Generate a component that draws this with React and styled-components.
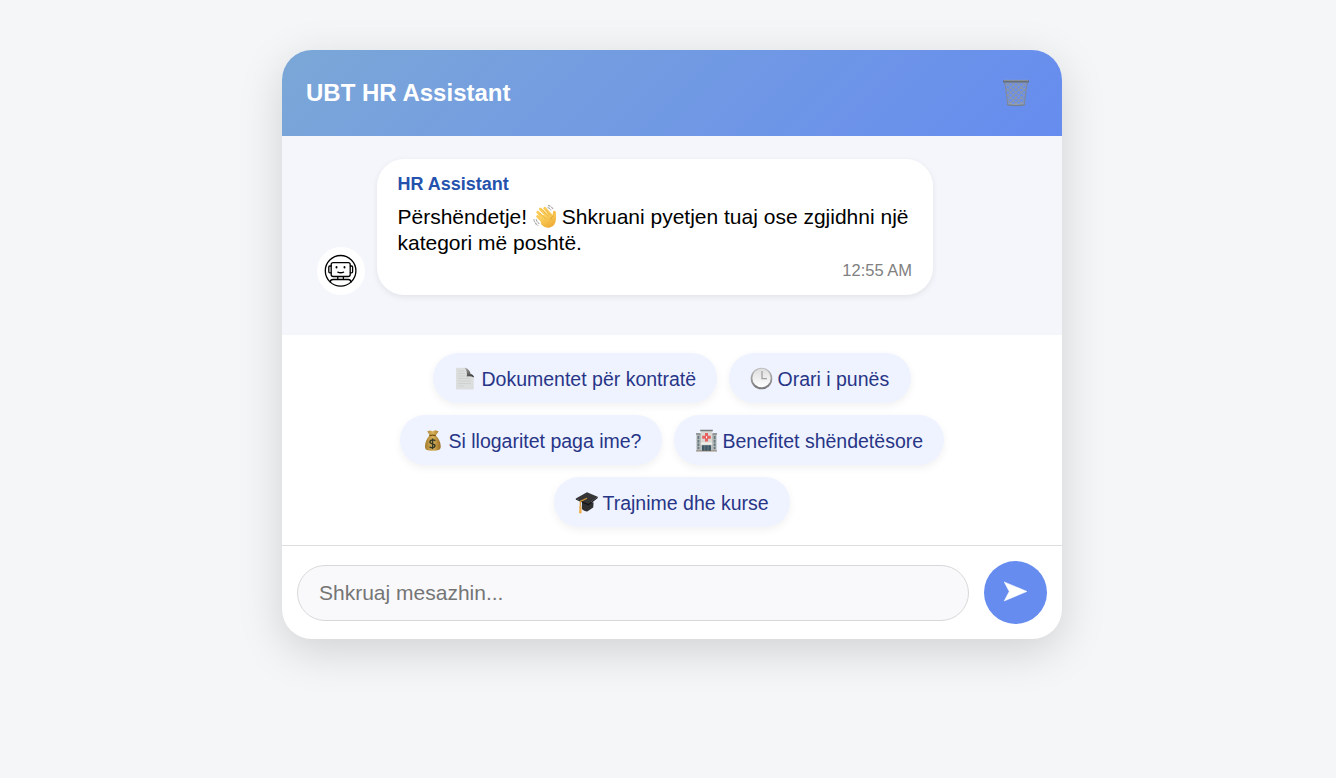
import React from "react";
import styled, { createGlobalStyle } from "styled-components";

const GlobalStyle = createGlobalStyle`
  * { box-sizing: border-box; }
  body {
    margin: 0;
    background: #f4f6f8;
    font-family: "Liberation Sans", Arial, sans-serif;
  }
  button, input { font-family: inherit; }
`;

const Page = styled.main`
  display: flex;
  justify-content: center;
  min-height: 778px;
  padding: 50px 0 0 8px;
  align-items: flex-start;
`;

const Card = styled.section`
  width: 780px;
  background: #fff;
  border-radius: 30px;
  overflow: hidden;
  box-shadow: 0 12px 45px rgba(0, 0, 0, 0.15);
`;

const Header = styled.header`
  display: flex;
  align-items: center;
  justify-content: space-between;
  height: 86px;
  padding: 0 32px 0 24px;
  background: linear-gradient(135deg, #7ba7d7, #668cef);
`;

const Title = styled.h1`
  margin: 0;
  color: #fff;
  font-size: 24px;
  line-height: 28px;
`;

const ClearButton = styled.button`
  display: flex;
  padding: 0;
  border: 0;
  background: none;
`;

const Messages = styled.div`
  display: flex;
  align-items: flex-end;
  gap: 12px;
  height: 199px;
  padding: 0 35px 40px;
  background: #f4f6fb;
`;

const Avatar = styled.div`
  width: 48px;
  height: 48px;
  border-radius: 50%;
  background: #fff;
  flex: none;
`;

const Bubble = styled.article`
  width: 556px;
  height: 136px;
  padding: 15px 21px 0 20.5px;
  border-radius: 27px;
  background: #fff;
  box-shadow: 0 2px 6px rgba(0, 0, 0, 0.08);
`;

const Sender = styled.div`
  color: #2452ad;
  font-size: 18px;
  font-weight: 700;
  line-height: 20px;
`;

const MessageText = styled.p`
  margin: 10px 0 0;
  color: #000;
  font-size: 21px;
  line-height: 26px;
  white-space: nowrap;
`;

const Time = styled.time`
  display: block;
  margin-top: 5px;
  color: #808080;
  font-size: 16.5px;
  line-height: 19px;
  text-align: right;
`;

const Suggestions = styled.div`
  display: flex;
  flex-wrap: wrap;
  justify-content: center;
  align-content: flex-start;
  gap: 12px;
  height: 210px;
  padding: 18px 100px 0;
`;

const Chip = styled.button`
  display: flex;
  align-items: center;
  gap: 5px;
  width: ${(p) => p.$width}px;
  height: 50px;
  padding: 2px 0 0 20.5px;
  border: 0;
  border-radius: 27px;
  background: #eef3ff;
  color: #283587;
  font-size: 19.5px;
  white-space: nowrap;
  box-shadow: 0 3px 9px rgba(0, 0, 0, 0.06);
`;

const Composer = styled.form`
  display: flex;
  align-items: center;
  gap: 15px;
  height: 94px;
  padding: 0 15px;
  border-top: 1px solid #dddddd;
`;

const MessageInput = styled.input`
  flex: 1;
  height: 56px;
  padding: 0 21px;
  border: 1px solid #d8d8da;
  border-radius: 28px;
  outline: none;
  background: #f9f9fb;
  font-size: 21px;
  &::placeholder { color: #757575; }
`;

const SendButton = styled.button`
  display: flex;
  align-items: center;
  justify-content: center;
  width: 63px;
  height: 63px;
  padding: 0 1px 2px 0;
  border: 0;
  border-radius: 50%;
  background: #668cef;
`;

const Glyph = styled.svg`
  display: block;
  flex: none;
  width: ${(p) => p.$size || 23}px;
  height: ${(p) => p.$size || 23}px;
`;

const ChipGlyph = styled(Glyph)`
  margin-top: -2px;
`;

const InlineGlyph = styled(Glyph)`
  display: inline-block;
  vertical-align: -3px;
  margin: -3px -1.5px -1px 0;
`;

const Basket = () => (
  <Glyph $size={28} viewBox="0 0 28 28" aria-hidden="true">
    <defs>
      <clipPath id="basket"><path d="M2.6 3h22.8l-3 23H5.6z" /></clipPath>
    </defs>
    <path
      clipPath="url(#basket)"
      d="M-20 2l26 25M-14.5 2l26 25M-9 2l26 25M-3.5 2l26 25M2 2l26 25M7.5 2l26 25M13 2l26 25M18.5 2l26 25M9.5 2l-26 25M15 2l-26 25M20.5 2l-26 25M26 2L0 27M31.5 2l-26 25M37 2L11 27M42.5 2l-26 25M48 2L22 27"
      stroke="#8d97a8"
      strokeWidth="1.15"
    />
    <path d="M2.8 3l3 23M25.2 3l-3 23" stroke="#7e899b" strokeWidth="1.1" />
    <path d="M5.4 24.6q8.6 1.4 17.2 0v2q-8.6 1.1-17.2 0z" fill="#76808e" />
    <path d="M6 24.8q8 1.2 16 0" stroke="#b0b8c2" strokeWidth=".6" fill="none" />
    <rect x="1" y="1" width="26" height="2.6" rx="1.2" fill="#666e79" />
    <path d="M2 1.3h24" stroke="#a3abb5" strokeWidth=".7" />
  </Glyph>
);

const Robot = () => (
  <svg width="48" height="48" viewBox="0 0 48 48" fill="none" stroke="#000" strokeWidth="1.3" strokeLinejoin="round" strokeLinecap="round" aria-hidden="true">
    <circle cx="23.6" cy="23.8" r="15.3" />
    <rect x="14.2" y="15.6" width="19" height="13.9" rx="2" />
    <path d="M14 19h-1.2q-1 0-1 1v4.8q0 1 1 1H14M33.4 19h1.2q1 0 1 1v4.8q0 1-1 1h-1.2" />
    <path d="M20.8 29.7v2.8M26.4 29.7v2.8M13.2 35v-.2q.3-2.3 2.8-2.3h15.2q2.5 0 2.8 2.3v.2" />
    <path d="M20.8 25.2q2.8 1.1 5.8 0" />
    <path d="M19.5 20v.6M27.5 20v.6" strokeWidth="1.9" />
  </svg>
);

const Wave = () => (
  <InlineGlyph $size={24.5} viewBox="0 0 25 25" aria-hidden="true">
    <defs>
      <linearGradient id="skin" x1="0" y1="0" x2=".6" y2="1">
        <stop stopColor="#ffdf70" /><stop offset="1" stopColor="#efad35" />
      </linearGradient>
    </defs>
    <g fill="none" stroke="#fbcb58" strokeLinecap="round" strokeWidth="3">
      <path d="M4.8 12.8l7.2 7M4.9 8.5l9 9M7.6 5.2l9 9M12 4.4l7 8" />
      <path d="M21.2 15.5l.6-7" stroke="#f6bd49" />
    </g>
    <path d="M7 13L17 8l3.5 3.6 2.7-3q.5 3 .2 7-.4 6.8-6 8.3-5 1.3-9-3z" fill="url(#skin)" />
    <path d="M7 9.3l6 6M9.8 6.5l6 6M13.3 6.3l4.7 5.4" stroke="#dfa136" strokeWidth=".6" />
    <path d="M18 16q1-3.4 2.8-4" stroke="#d39731" strokeWidth=".7" fill="none" />
    <path d="M.8 15.5q.8 4.5 4.7 6.6M3.2 15.5q.6 2.9 3.2 4.6M15.2 1.4q4 .7 5.6 4.6M14.8 3.5q2.4.4 3.6 3" fill="none" stroke="#aaaaaa" strokeWidth="1.05" strokeDasharray="3 .7" />
  </InlineGlyph>
);

const Paper = () => (
  <ChipGlyph viewBox="0 0 23 23" aria-hidden="true">
    <defs><linearGradient id="fold" x1="0" y1="0" x2=".6" y2="1"><stop stopColor="#aaa" /><stop offset="1" stopColor="#3d3d3d" /></linearGradient></defs>
    <path d="M2 .8h9.5q2 .6 3.6 3l4.6 6V22.5H2z" fill="#dcdddd" />
    <path d="M4 4h6M4 6.5h7M4 9h7M4 11.5h12M4 14h13M4 16.5h13M4 19h6" stroke="#c9caca" strokeWidth=".6" />
    <path d="M10.5.8q3.3.6 5 3.2 1 1.8.9 3.1 2.8.2 3.8 3.4-3.5-1.8-7.5-1 .9-5.9-2.2-8.7z" fill="url(#fold)" />
  </ChipGlyph>
);

const Clock = () => (
  <ChipGlyph viewBox="0 0 23 23" aria-hidden="true">
    <defs><linearGradient id="rim" x1="0" y1="0" x2="0" y2="1"><stop stopColor="#c2c2c2" /><stop offset="1" stopColor="#777" /></linearGradient>
    <linearGradient id="face" x1="0" y1="0" x2="0" y2="1"><stop stopColor="#dedede" /><stop offset="1" stopColor="#ffffff" /></linearGradient></defs>
    <circle cx="11.5" cy="11.5" r="10.8" fill="url(#rim)" />
    <circle cx="11.5" cy="11" r="9.2" fill="url(#face)" />
    <path d="M12 4v7.6h5" fill="none" stroke="#a0a0a0" strokeWidth="1.3" />
  </ChipGlyph>
);

const Money = () => (
  <ChipGlyph viewBox="0 0 23 23" aria-hidden="true">
    <defs><linearGradient id="sack"><stop stopColor="#a57b2c" /><stop offset=".5" stopColor="#d9b55c" /><stop offset="1" stopColor="#9a6c22" /></linearGradient></defs>
    <path d="M8.6 6.4L6.3 2.2l2.8-.6 2.4.7 2.8-1.1 3.3 1-2.8 4.3c2.9 2.6 4.9 6.8 4.9 11 0 3.6-2.8 4.2-8 4.2s-7.7-.6-7.7-4.2c0-4.2 1.8-8.4 4.6-11.1z" fill="url(#sack)" />
    <path d="M8.3 6.7q3.8-1.1 6.5 0" fill="none" stroke="#785116" strokeWidth="1.2" />
    <path d="M14.4 11.7q-2.3-1.5-4.6-.3-1.9 1.8.3 2.9l2.8 1q2 1.3.4 2.8-2.4 1.4-4.7-.4M11.6 9.4v10.8" fill="none" stroke="#343827" strokeWidth="1.4" />
  </ChipGlyph>
);

const Hospital = () => (
  <ChipGlyph viewBox="0 0 23 23" aria-hidden="true">
    <path d="M1.5 5h20v17h-20z" fill="#b0b3b1" />
    <path d="M5.8 1h11.4v21H5.8z" fill="#d8d8d4" />
    <path d="M5.2.8h12.6v1.4H5.2zM1 4.3h4.5v1.3H1zM17.5 4.3H22v1.3h-4.5z" fill="#747979" />
    <path d="M2.5 7h1.7v13H2.5zM18.8 7h1.7v13h-1.7z" fill="#647a84" />
    <path d="M1.5 10.5h4M1.5 14h4M1.5 17.5h4M17.5 10.5h4M17.5 14h4M17.5 17.5h4" stroke="#b9bdb9" strokeWidth=".8" />
    <path d="M10 4h3v2.8h2.8v3H13v2.8h-3V9.8H7.2v-3H10z" fill="#e6615f" />
    <path d="M11 7.3h1v2h-1z" fill="#fff" />
    <path d="M5.8 13.6h11.4v1.8H5.8z" fill="#f1f1ec" />
    <path d="M6.8 16.2h9.4V22H6.8z" fill="#405967" />
    <path d="M9.8 16.2V22M13.1 16.2V22" stroke="#8f9999" strokeWidth=".5" />
    <path d="M1 22h21" stroke="#85725f" strokeWidth=".8" />
  </ChipGlyph>
);

const GraduationCap = () => (
  <ChipGlyph viewBox="0 0 23 23" aria-hidden="true">
    <path d="M7 10l11.6 1.5-.4 5.1-6 3.8q-3 .2-5.4-2.4z" fill="#303030" />
    <path d="M.8 7.4L12 1.2l10.7 4.5L13.4 13z" fill="#363636" />
    <path d="M.8 7.4L13.4 13l9.3-7.3V7l-9.3 7.6L.8 8.6z" fill="#151515" />
    <path d="M12 7.3L5.3 10.5V17" stroke="#d99b38" strokeWidth="1.2" fill="none" />
    <path d="M4.5 15h1.7l.5 7q-1.3.9-2.6 0z" fill="#eead48" />
  </ChipGlyph>
);

const SUGGESTIONS = [
  { text: "Dokumentet për kontratë", Icon: Paper, width: 284 },
  { text: "Orari i punës", Icon: Clock, width: 182 },
  { text: "Si llogaritet paga ime?", Icon: Money, width: 262 },
  { text: "Benefitet shëndetësore", Icon: Hospital, width: 270 },
  { text: "Trajnime dhe kurse", Icon: GraduationCap, width: 236 },
];

export default function App() {
  return (
    <>
      <GlobalStyle />
      <Page>
        <Card>
          <Header>
            <Title>UBT HR Assistant</Title>
            <ClearButton type="button" aria-label="Clear"><Basket /></ClearButton>
          </Header>
          <Messages>
            <Avatar><Robot /></Avatar>
            <Bubble>
              <Sender>HR Assistant</Sender>
              <MessageText>
                Përshëndetje! <Wave /> Shkruani pyetjen tuaj ose zgjidhni një<br />
                kategori më poshtë.
              </MessageText>
              <Time>12:55 AM</Time>
            </Bubble>
          </Messages>
          <Suggestions>
            {SUGGESTIONS.map(({ text, Icon, width }) => (
              <Chip key={text} type="button" $width={width}><Icon />{text}</Chip>
            ))}
          </Suggestions>
          <Composer onSubmit={(e) => e.preventDefault()}>
            <MessageInput placeholder="Shkruaj mesazhin..." />
            <SendButton type="submit" aria-label="Send">
              <svg width="25" height="21" viewBox="0 0 25 21" aria-hidden="true">
                <path d="M1.2.9L24 10.4 1.2 20 6.2 10.4z" fill="#fff" stroke="#fff" strokeWidth=".5" strokeLinejoin="round" />
              </svg>
            </SendButton>
          </Composer>
        </Card>
      </Page>
    </>
  );
}
